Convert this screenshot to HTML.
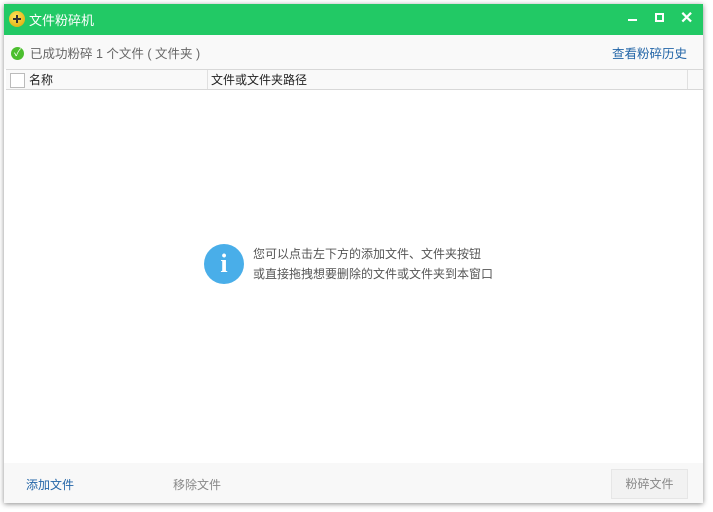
<!DOCTYPE html>
<html><head><meta charset="utf-8"><style>
body{margin:0;width:713px;height:512px;background:#fff;overflow:hidden;font-family:"Liberation Sans","Noto Sans CJK SC",sans-serif;font-size:12px;position:relative}
.win{position:absolute;left:4px;top:4px;width:699px;height:499px;background:#fff;box-shadow:0 1px 5px rgba(0,0,0,.45)}
.tb{position:absolute;left:0;top:0;width:699px;height:31px;background:#22c965}
.a{position:absolute;white-space:nowrap}
</style></head><body>
<div class="win">
<div class="tb">
 <div class="a" style="left:5px;top:7px;width:16px;height:16px;border-radius:50%;background:radial-gradient(circle at 40% 35%,#ffe45a,#d9a400)"></div>
 <div class="a" style="left:9px;top:14px;width:8px;height:2px;background:#333"></div>
 <div class="a" style="left:12px;top:11px;width:2px;height:8px;background:#333"></div>
 <div class="a" style="left:25px;top:6px;color:#fff;font-size:13px">文件粉碎机</div>
 <div class="a" style="left:624px;top:15px;width:9px;height:2px;background:#fff"></div>
 <div class="a" style="left:651px;top:9px;width:5px;height:5px;border:2px solid #fff"></div>
 <div class="a" style="left:676px;top:4px;color:#fff;font-size:16px;font-weight:bold">✕</div>
</div>
<div class="a" style="left:0;top:31px;width:699px;height:34px;background:#f9f9f9"></div>
<div class="a" style="left:7px;top:43px;width:13px;height:13px;border-radius:50%;background:#4cbf2f;color:#fff;font-size:10px;line-height:13px;text-align:center">✓</div>
<div class="a" style="left:26px;top:39px;color:#666;font-size:12.5px">已成功粉碎 1 个文件 ( 文件夹 )</div>
<div class="a" style="left:608px;top:39px;color:#2466a8;font-size:12.5px">查看粉碎历史</div>
<div class="a" style="left:2px;top:65px;width:697px;height:21px;background:#f9f9f9;border-top:1px solid #d8d8d8;border-bottom:1px solid #d8d8d8;box-sizing:border-box"></div>
<div class="a" style="left:6px;top:69px;width:13px;height:13px;border:1px solid #bbb;background:#fff"></div>
<div class="a" style="left:25px;top:67px;color:#222">名称</div>
<div class="a" style="left:203px;top:66px;width:1px;height:19px;background:#e0e0e0"></div>
<div class="a" style="left:207px;top:67px;color:#222">文件或文件夹路径</div>
<div class="a" style="left:683px;top:66px;width:1px;height:19px;background:#e0e0e0"></div>
<div class="a" style="left:200px;top:240px;width:40px;height:40px;border-radius:50%;background:#49aee9;color:#fff;font:bold 26px/40px 'Liberation Serif',serif;text-align:center">i</div>
<div class="a" style="left:249px;top:240px;color:#555;line-height:20px">您可以点击左下方的添加文件、文件夹按钮<br>或直接拖拽想要删除的文件或文件夹到本窗口</div>
<div class="a" style="left:0;top:459px;width:699px;height:40px;background:#f8f8f8"></div>
<div class="a" style="left:22px;top:472px;color:#2466a8">添加文件</div>
<div class="a" style="left:169px;top:472px;color:#888">移除文件</div>
<div class="a" style="left:607px;top:465px;width:77px;height:30px;background:#f2f2f2;border:1px solid #e6e6e6;box-sizing:border-box;color:#888;text-align:center;line-height:28px">粉碎文件</div>
</div>
</body></html>
